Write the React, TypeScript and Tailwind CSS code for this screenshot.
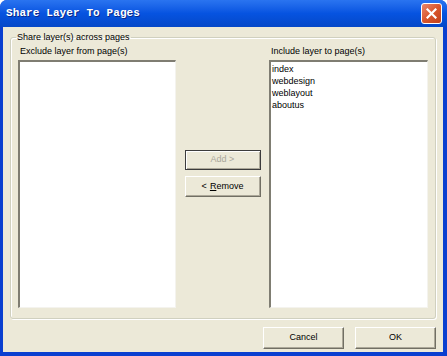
export default function App() {
  const included = ["index", "webdesign", "weblayout", "aboutus"];

  return (
    <div className="w-[447px] h-[356px] flex flex-col bg-[#0a3fd0] rounded-t-[7px] overflow-hidden font-['Liberation_Sans',Arial,sans-serif] text-[9px] text-black">
      {/* title bar */}
      <div className="h-[27px] shrink-0 flex items-center justify-between pl-[6px] pr-[5px] bg-gradient-to-b from-[#2a74f0] via-[#0653e0] to-[#0548c8]">
        <span className="font-['Liberation_Mono',monospace] font-bold text-[11px] text-white tracking-[0.1px] [text-shadow:1px_1px_0_#0a2a8a]">
          Share Layer To Pages
        </span>
        <div className="w-[21px] h-[21px] rounded-[3px] border border-white bg-gradient-to-br from-[#e8866a] via-[#d9562c] to-[#c2401a] flex items-center justify-center">
          <svg width="11" height="11" viewBox="0 0 11 11">
            <path d="M1.5 1.5 L9.5 9.5 M9.5 1.5 L1.5 9.5" stroke="white" strokeWidth="2.2" strokeLinecap="square" />
          </svg>
        </div>
      </div>

      {/* client area */}
      <div className="flex-1 mx-[3px] mr-[4px] mb-[4px] bg-[#ece9d8] flex flex-col px-[7px] pt-[4px]">
        <fieldset className="h-[288px] border border-[#d0d0bf] rounded-[3px] px-[7px] pb-[8px] shadow-[inset_1px_1px_0_#fff,1px_1px_0_#fff]">
          <legend className="px-[1px] ml-[-2px] leading-[13px]">Share layer(s) across pages</legend>
          <div className="flex pt-[1px]">
            <div className="flex flex-col w-[158px]">
              <span className="pl-[2px] h-[15px] leading-[13px]">Exclude layer from page(s)</span>
              <div className="h-[248px] bg-white border-t-2 border-l-2 border-r border-b border-t-[#7f7d72] border-l-[#7f7d72] border-r-[#f4f3ee] border-b-[#f4f3ee]" />
            </div>
            <div className="flex-1 flex flex-col items-center pt-[105px] gap-[6px]">
              <div className="w-[76px] h-[20px] border border-[#3c3c3c] flex items-center justify-center text-[#a9a79b] bg-[#ece9d8] shadow-[inset_1px_1px_0_#fff,inset_-1px_-1px_0_#aca899]">
                Add &gt;
              </div>
              <div className="w-[76px] h-[21px] flex items-center justify-center bg-[#ece9d8] border-t border-l border-r border-b border-t-white border-l-white border-r-[#716f64] border-b-[#716f64] shadow-[inset_-1px_-1px_0_#aca899]">
                &lt; <span className="underline ml-[3px]">R</span>emove
              </div>
            </div>
            <div className="flex flex-col w-[159px]">
              <span className="pl-[2px] h-[15px] leading-[13px]">Include layer to page(s)</span>
              <div className="h-[248px] bg-white border-t-2 border-l-2 border-r border-b border-t-[#7f7d72] border-l-[#7f7d72] border-r-[#f4f3ee] border-b-[#f4f3ee] pt-[1px] pl-[1px]">
                {included.map((p) => (
                  <div key={p} className="h-[12px] leading-[12px]">
                    {p}
                  </div>
                ))}
              </div>
            </div>
          </div>
        </fieldset>

        <div className="flex justify-end gap-[11px] mt-[8px]">
          <div className="w-[81px] h-[22px] flex items-center justify-center bg-[#ece9d8] border-t border-l border-r border-b border-t-white border-l-white border-r-[#716f64] border-b-[#716f64] shadow-[inset_-1px_-1px_0_#aca899]">
            Cancel
          </div>
          <div className="w-[81px] h-[22px] flex items-center justify-center bg-[#ece9d8] border-t border-l border-r border-b border-t-white border-l-white border-r-[#716f64] border-b-[#716f64] shadow-[inset_-1px_-1px_0_#aca899]">
            OK
          </div>
        </div>
      </div>
    </div>
  );
}
